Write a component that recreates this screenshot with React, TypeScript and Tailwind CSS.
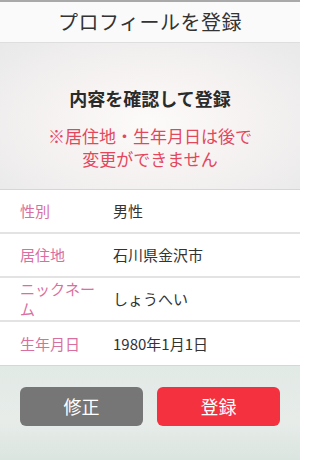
import React from "react";

const rows: { label: string; value: string }[] = [
  { label: "性別", value: "男性" },
  { label: "居住地", value: "石川県金沢市" },
  { label: "ニックネーム", value: "しょうへい" },
  { label: "生年月日", value: "1980年1月1日" },
];

export default function App() {
  return (
    <div
      className="w-[300px] h-[460px] overflow-hidden flex flex-col bg-[#e4ebe8]"
      style={{ fontFamily: '"Noto Sans CJK JP", "Noto Sans", sans-serif' }}
    >
      <div className="h-[2px] bg-[#a9a9a9]" />
      <header className="h-[41px] bg-[#fafafa] border-b border-[#dedede] flex items-center justify-center">
        <h1 className="text-[20px] text-[#333] leading-none tracking-[0.5px]">プロフィールを登録</h1>
      </header>
      <section className="h-[146px] flex flex-col items-center pt-[43px] bg-[radial-gradient(ellipse_at_50%_55%,#fdfafa_0%,#f6f2f2_45%,#e9e9e9_100%)]">
        <h2 className="text-[18px] font-bold text-[#2a2a2a] leading-[24px]">内容を確認して登録</h2>
        <p className="mt-[14px] text-[17px] text-[#e4475c] leading-[23px] text-center">
          ※居住地・生年月日は後で
          <br />
          変更ができません
        </p>
      </section>
      <div className="bg-white border-t border-[#d6d6d6]">
        {rows.map((r, i) => (
          <div
            key={i}
            className={`h-[44px] flex items-center px-[20px] ${i < rows.length - 1 ? "border-b-2 border-[#e3e3e3]" : "border-b border-[#d6d6d6]"}`}
          >
            <div className="w-[80px] text-[15px] leading-[20px] text-[#d96fa0]">{r.label}</div>
            <div className="ml-[13px] text-[15px] leading-[20px] text-[#333]">{r.value}</div>
          </div>
        ))}
      </div>
      <div className="flex-1 bg-[linear-gradient(180deg,#e2eae6_0%,#e7ece9_60%,#dbe5e0_100%)] flex gap-[14px] px-[20px] pt-[21px]">
        <button className="w-[123px] h-[39px] rounded-[6px] bg-[#767676] text-white text-[18px] flex items-center justify-center">
          修正
        </button>
        <button className="w-[123px] h-[39px] rounded-[6px] bg-[#f3313f] text-white text-[18px] flex items-center justify-center">
          登録
        </button>
      </div>
    </div>
  );
}
